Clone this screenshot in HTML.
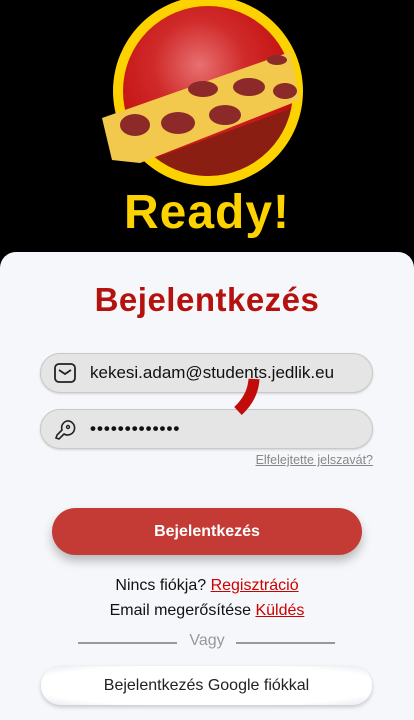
<!DOCTYPE html>
<html><head><meta charset="utf-8"><style>
html,body{margin:0;width:414px;height:720px;overflow:hidden}
body{background:#000;font-family:"Liberation Sans",sans-serif;position:relative}
.ready{position:absolute;left:0;width:414px;top:185px;text-align:center;color:#fcd200;font-weight:bold;font-size:48px;letter-spacing:1px}
.card{position:absolute;left:0;top:252px;width:414px;height:468px;background:#f6f7fa;border-radius:16px 16px 0 0}
h1{position:absolute;top:281px;left:0;width:414px;text-align:center;margin:0;color:#b5120f;font-size:33px;font-weight:bold;letter-spacing:.5px}
.inp{position:absolute;left:40px;width:331px;height:38px;border-radius:20px;background:#e5e5e5;border:1px solid #c8c8c8;box-shadow:0 1px 2px rgba(0,0,0,.15)}
.inp span{position:absolute;left:49px;top:9px;font-size:17px;color:#111}
.inp svg{position:absolute;left:12px;top:8px}
.forgot{position:absolute;right:41px;top:453px;font-size:12.5px;color:#888;text-decoration:underline}
.btn{position:absolute;left:52px;top:508px;width:310px;height:47px;border-radius:24px;background:#c43b35;box-shadow:0 6px 10px rgba(0,0,0,.25);color:#fff;font-weight:bold;font-size:16px;text-align:center;line-height:47px}
.t{position:absolute;left:0;width:414px;text-align:center;font-size:16px;color:#111}
.t a{color:#c00;text-decoration:underline}
.line{position:absolute;top:642px;height:2px;background:#999}
.g{position:absolute;left:41px;top:666px;width:331px;height:39px;border-radius:20px;background:radial-gradient(ellipse at center,#fff 75%,#e8eaf0);box-shadow:0 2px 4px rgba(0,0,0,.2);text-align:center;line-height:39px;font-size:16px;color:#222}
</style></head><body>
<svg width="414" height="200" style="position:absolute;left:0;top:0" viewBox="0 0 414 200">
<defs>
<radialGradient id="rg" cx="0.45" cy="0.35" r="0.6"><stop offset="0" stop-color="#e87070"/><stop offset="0.45" stop-color="#d02a2a"/><stop offset="1" stop-color="#c20c0c"/></radialGradient>
<clipPath id="ci"><circle cx="208" cy="91" r="85"/></clipPath>
<clipPath id="c"><path d="M0 0H300V200H0z"/></clipPath></defs>
<circle cx="208" cy="91" r="95" fill="#fcd200"/>
<circle cx="208" cy="91" r="85" fill="url(#rg)"/>
<g clip-path="url(#ci)"><polygon points="150,160 300,105 300,140 230,175 160,178" fill="#8a1e12"/></g>
<g clip-path="url(#c)">
<polygon points="102,118 290,52 300,100 140,163 112,160" fill="#f2c94c"/>
<g fill="#8b2a28"><ellipse cx="135" cy="125" rx="15" ry="11"/><ellipse cx="178" cy="123" rx="17" ry="11"/><ellipse cx="225" cy="115" rx="16" ry="10"/><ellipse cx="203" cy="89" rx="15" ry="8"/><ellipse cx="249" cy="87" rx="16" ry="9"/><ellipse cx="285" cy="91" rx="12" ry="8"/><ellipse cx="277" cy="60" rx="10" ry="5"/></g>
</g></svg>
<div class="ready">Ready!</div>
<div class="card"></div>
<h1>Bejelentkezés</h1>
<div class="inp" style="top:353px"><svg width="24" height="22" viewBox="0 0 24 22"><rect x="2" y="2" width="20" height="18" rx="4" fill="none" stroke="#222" stroke-width="1.8"/><path d="M6 8l6 4 6-4" fill="none" stroke="#222" stroke-width="1.8"/></svg><span>kekesi.adam@students.jedlik.eu</span></div>
<div class="inp" style="top:409px"><svg width="24" height="24" viewBox="0 0 24 24"><path d="M14 3a7 7 0 1 1-3 13l-5 5-3-1 1-3 5-5a7 7 0 0 1 5-9z" fill="none" stroke="#222" stroke-width="1.6"/><circle cx="15" cy="9" r="1.5" fill="none" stroke="#222" stroke-width="1.4"/></svg><span style="letter-spacing:1px;font-weight:bold">•••••••••••••</span></div>
<svg width="40" height="50" style="position:absolute;left:228px;top:375px" viewBox="0 0 40 50"><path d="M26 4 Q25 22 10 36" fill="none" stroke="#c20c0c" stroke-width="11"/></svg>
<div class="forgot">Elfelejtette jelszavát?</div>
<div class="btn">Bejelentkezés</div>
<div class="t" style="top:577px">Nincs fiókja? <a>Regisztráció</a></div>
<div class="t" style="top:602px">Email megerősítése <a>Küldés</a></div>
<div class="line" style="left:78px;width:99px"></div>
<div class="line" style="left:236px;width:99px"></div>
<div class="t" style="top:632px;color:#999">Vagy</div>
<div class="g">Bejelentkezés Google fiókkal</div>
</body></html>
